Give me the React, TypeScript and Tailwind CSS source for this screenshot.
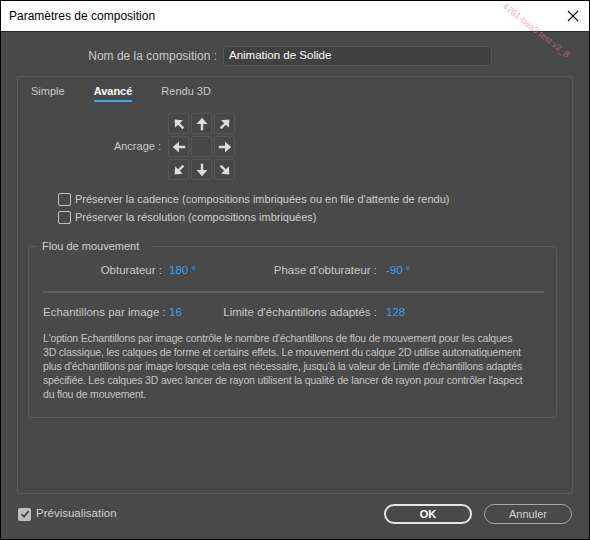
import React from "react";

const Arrow = ({ rot }: { rot: number }) => (
  <svg width="14" height="14" viewBox="0 0 14 14" style={{ transform: `rotate(${rot}deg)` }}>
    <path d="M7 0.8 L12.4 7 L8.2 7 L8.2 13.2 L5.8 13.2 L5.8 7 L1.6 7 Z" fill="#dcdcdc" />
  </svg>
);

const Cell = ({ rot }: { rot?: number }) => (
  <div className="w-[21px] h-[21px] border border-[#565656] rounded-[2px] flex items-center justify-center bg-[#474747]">
    {rot !== undefined && <Arrow rot={rot} />}
  </div>
);

const Box = ({ checked }: { checked?: boolean }) =>
  checked ? (
    <div className="w-[13px] h-[13px] rounded-[2px] bg-[#bdbdbd] flex items-center justify-center">
      <svg width="10" height="10" viewBox="0 0 10 10">
        <path d="M1.5 5.2 L4 7.6 L8.6 2.2" stroke="#4a4a4a" strokeWidth="1.8" fill="none" />
      </svg>
    </div>
  ) : (
    <div className="w-[13px] h-[13px] rounded-[2px] border-[1.5px] border-[#c4c4c4]" />
  );

export default function App() {
  return (
    <div
      className="relative w-[590px] h-[540px] border border-black bg-[#494949] flex flex-col overflow-hidden text-[#cfcfcf]"
      style={{ fontFamily: '"Liberation Sans", Arial, sans-serif' }}
    >
      {/* Title bar */}
      <div className="h-[31px] bg-white border-b border-[#2b2b2b] flex items-center justify-between pl-[8px] pr-[10px] shrink-0">
        <span className="text-[12px] text-black">Paramètres de composition</span>
        <svg width="12" height="12" viewBox="0 0 12 12">
          <path d="M1 1 L11 11 M11 1 L1 11" stroke="#111" strokeWidth="1.1" />
        </svg>
      </div>

      <div className="px-[16px] flex flex-col">
        {/* Name row */}
        <div className="flex items-center mt-[14px] h-[20px]">
          <div className="w-[200px] text-right text-[12px] text-[#c8c8c8]">Nom de la composition :</div>
          <div className="ml-[6px] w-[269px] h-[20px] bg-[#414141] border border-[#565656] rounded-[3px] flex items-center px-[5px] text-[11.5px] text-white">
            Animation de Solide
          </div>
        </div>

        {/* Tab panel */}
        <div className="mt-[10px] h-[418px] border border-[#5a5a5a] rounded-[3px] flex flex-col px-[10px]">
          <div className="flex items-start gap-[29px] pl-[3px] mt-[7px] text-[11px] leading-[14px]">
            <div className="text-[#c8c8c8] pb-[2px] border-b-2 border-transparent">Simple</div>
            <div className="text-white pb-[2px] border-b-2 border-[#3ea4ef] font-bold">Avancé</div>
            <div className="text-[#c8c8c8] pb-[2px] border-b-2 border-transparent">Rendu 3D</div>
          </div>

          {/* Anchor */}
          <div className="flex items-center mt-[11px]">
            <div className="w-[133px] text-right text-[11px] text-[#c8c8c8]">Ancrage :</div>
            <div className="ml-[7px] grid grid-cols-3 gap-[2px]">
              <Cell rot={-45} />
              <Cell rot={0} />
              <Cell rot={45} />
              <Cell rot={-90} />
              <Cell />
              <Cell rot={90} />
              <Cell rot={-135} />
              <Cell rot={180} />
              <Cell rot={135} />
            </div>
          </div>

          {/* Checkboxes */}
          <div className="flex flex-col gap-[5px] mt-[13px] pl-[30px] text-[11px] leading-[13px] text-[#cfcfcf]">
            <div className="flex items-center gap-[4px] h-[13px]">
              <Box />
              <span>Préserver la cadence (compositions imbriquées ou en file d'attente de rendu)</span>
            </div>
            <div className="flex items-center gap-[4px] h-[13px]">
              <Box />
              <span>Préserver la résolution (compositions imbriquées)</span>
            </div>
          </div>

          {/* Motion blur group */}
          <fieldset className="mt-[15px] mr-[5px] border border-[#595959] rounded-[3px] h-[179px] px-[14px] min-w-0">
            <legend className="ml-[-5px] pl-[4px] pr-[12px] text-[11px] leading-[14px] text-[#cfcfcf]">Flou de mouvement</legend>
            <div className="flex items-center mt-[10px] text-[11.5px] leading-[14px]">
              <div className="w-[119px] text-right text-[#c8c8c8] whitespace-nowrap">Obturateur :</div>
              <div className="ml-[7px] w-[50px] text-[#3da0ea]">180 °</div>
              <div className="w-[158px] text-right text-[#c8c8c8] whitespace-nowrap">Phase d'obturateur :</div>
              <div className="ml-[9px] text-[#3da0ea]">-90 °</div>
            </div>
            <div className="h-[2px] bg-[#5c5c5c] mt-[14px] mr-[-2px] ml-[-1px]" />
            <div className="flex items-center mt-[12px] text-[11.5px] leading-[14px]">
              <div className="w-[119px] text-right text-[#c8c8c8] whitespace-nowrap">Echantillons par image :</div>
              <div className="ml-[7px] w-[50px] text-[#3da0ea]">16</div>
              <div className="w-[158px] text-right text-[#c8c8c8] whitespace-nowrap">Limite d'échantillons adaptés :</div>
              <div className="ml-[9px] text-[#3da0ea]">128</div>
            </div>
            <div className="mt-[12px] text-[10.5px] leading-[14px] tracking-[-0.18px] text-[#c4c4c4] whitespace-nowrap">
              <div>L'option Echantillons par image contrôle le nombre d'échantillons de flou de mouvement pour les calques</div>
              <div>3D classique, les calques de forme et certains effets. Le mouvement du calque 2D utilise automatiquement</div>
              <div>plus d'échantillons par image lorsque cela est nécessaire, jusqu'à la valeur de Limite d'échantillons adaptés</div>
              <div>spécifiée.  Les calques 3D avec lancer de rayon utilisent la qualité de lancer de rayon pour contrôler l'aspect</div>
              <div>du flou de mouvement.</div>
            </div>
          </fieldset>
        </div>

        {/* Bottom row */}
        <div className="flex items-center mt-[10px] h-[20px]">
          <div className="flex items-center gap-[5px] pl-[1px]">
            <Box checked />
            <span className="text-[11.5px] text-[#cfcfcf]">Prévisualisation</span>
          </div>
          <div className="ml-auto flex gap-[12px] pr-[1px]">
            <div className="w-[88px] h-[20px] rounded-full border-2 border-[#e4e4e4] flex items-center justify-center text-[11px] font-bold text-white">
              OK
            </div>
            <div className="w-[88px] h-[20px] rounded-full border-[1.5px] border-[#a8a8a8] flex items-center justify-center text-[11px] text-[#d4d4d4]">
              Annuler
            </div>
          </div>
        </div>
      </div>

      {/* Watermark */}
      <div className="pointer-events-none absolute top-[0px] left-[506px] rotate-[38deg] origin-top-left text-[9px] leading-[10px] text-[#e07a8a] opacity-60 whitespace-nowrap">
        4761-baa3 test v2_8
      </div>
    </div>
  );
}
